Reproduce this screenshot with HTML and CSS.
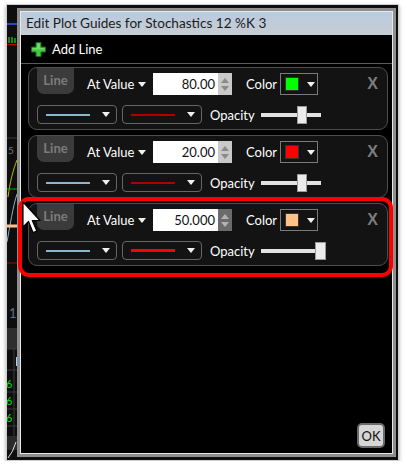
FILE: index.html
```html
<!DOCTYPE html>
<html lang="en">
<head>
    <meta charset="UTF-8">
    <meta name="viewport" content="width=device-width, initial-scale=1.0">
    <title>Edit Plot Guides</title>
    <link rel="stylesheet" href="styles.css">
</head>
<body>
    <div class="shot">
        <!-- chart peeking out behind the dialog -->
        <svg class="chart" viewBox="7 5 391 455" width="391" height="455">
            <rect x="7" y="5" width="391" height="455" fill="#0e0e0e"/>
            <line x1="7" y1="24" x2="17" y2="24" stroke="#2a46c8" stroke-width="2"/>
            <path d="M9 37v6M12 37v6M15 38v5" stroke="#20d020" stroke-width="1.2"/>
            <line x1="7" y1="44.5" x2="17" y2="44.5" stroke="#d00000" stroke-width="1"/>
            <line x1="7" y1="138" x2="17" y2="138" stroke="#3a3a3a"/>
            <text x="8" y="154" fill="#777" font-size="10" font-family="Lato, sans-serif">5</text>
            <path d="M8 197 C10 182 13 170 17 160" stroke="#b8b800" fill="none"/>
            <line x1="7" y1="189" x2="17" y2="189" stroke="#00b000"/>
            <path d="M7 242 C10 226 13 206 17 194" stroke="#8fb0c8" fill="none"/>
            <line x1="7" y1="226" x2="17" y2="226" stroke="#ffc090" stroke-width="3"/>
            <line x1="7" y1="263" x2="17" y2="263" stroke="#b00000"/>
            <text x="9" y="318" fill="#5b7590" font-size="13" font-family="Lato, sans-serif">1</text>
            <rect x="7" y="328" width="11" height="21" fill="#2e2e2e"/>
            <path d="M7 349H17M7 370H17M7 392H17M7 409H17M7 426H17M14 349V436" stroke="#3a3a3a"/>
            <rect x="16" y="357" width="1.5" height="9" fill="#9cd4ff"/>
            <text x="6" y="388" fill="#00e000" font-size="11" font-family="Lato, sans-serif">6</text>
            <text x="6" y="405" fill="#00e000" font-size="11" font-family="Lato, sans-serif">6</text>
            <text x="6" y="422" fill="#00e000" font-size="11" font-family="Lato, sans-serif">6</text>
            <rect x="7" y="436" width="11" height="14" fill="#2a2a2a"/>
            <path d="M8 458 Q13 452 16 442" stroke="#ddd" fill="none"/>
        </svg>

        <div class="dialog">
            <div class="dialog-inner">
                <div class="titlebar">Edit Plot Guides for Stochastics 12 %K 3</div>
                <div class="dialog-body">
                    <div class="add-line">
                        <svg class="plus" viewBox="0 0 15 15" width="15" height="15">
                            <path d="M5 0.5h5v4.5h4.5v5h-4.5v4.5h-5v-4.5h-4.5v-5h4.5z" fill="#3fc93f" stroke="#1d6a1d" stroke-width="1"/>
                            <path d="M6 1.5h3v4.5h4.5v1.5h-12v-1.5h4.5z" fill="#8ae88a" opacity="0.6"/>
                        </svg>
                        <span>Add Line</span>
                    </div>

                    <div class="guides">
                        <div class="guide">
                            <div class="guide-top">
                                <div class="line-tab">Line</div>
                                <div class="pick">At Value <span class="caret"></span></div>
                                <div class="value-input"><span class="value">80.00</span></div>
                                <div class="spin"><span class="up"></span><span class="down"></span></div>
                                <div class="color-label">Color</div>
                                <div class="color-box"><span class="swatch swatch-green"></span><span class="caret"></span></div>
                                <div class="remove">X</div>
                            </div>
                            <div class="guide-bottom">
                                <div class="style-select"><span class="stroke stroke-blue"></span><span class="caret"></span></div>
                                <div class="style-select"><span class="stroke stroke-darkred"></span><span class="caret"></span></div>
                                <div class="opacity-label">Opacity</div>
                                <div class="slider"><span class="thumb" style="left: 36px;"></span></div>
                            </div>
                        </div>

                        <div class="guide">
                            <div class="guide-top">
                                <div class="line-tab">Line</div>
                                <div class="pick">At Value <span class="caret"></span></div>
                                <div class="value-input"><span class="value">20.00</span></div>
                                <div class="spin"><span class="up"></span><span class="down"></span></div>
                                <div class="color-label">Color</div>
                                <div class="color-box"><span class="swatch swatch-red"></span><span class="caret"></span></div>
                                <div class="remove">X</div>
                            </div>
                            <div class="guide-bottom">
                                <div class="style-select"><span class="stroke stroke-blue"></span><span class="caret"></span></div>
                                <div class="style-select"><span class="stroke stroke-darkred"></span><span class="caret"></span></div>
                                <div class="opacity-label">Opacity</div>
                                <div class="slider"><span class="thumb" style="left: 36px;"></span></div>
                            </div>
                        </div>

                        <div class="guide">
                            <div class="guide-top">
                                <div class="line-tab">Line</div>
                                <div class="pick">At Value <span class="caret"></span></div>
                                <div class="value-input"><span class="value">50.000</span></div>
                                <div class="spin spin-active"><span class="up"></span><span class="down"></span></div>
                                <div class="color-label">Color</div>
                                <div class="color-box"><span class="swatch swatch-peach"></span><span class="caret"></span></div>
                                <div class="remove">X</div>
                            </div>
                            <div class="guide-bottom">
                                <div class="style-select"><span class="stroke stroke-blue"></span><span class="caret"></span></div>
                                <div class="style-select"><span class="stroke stroke-red"></span><span class="caret"></span></div>
                                <div class="opacity-label">Opacity</div>
                                <div class="slider"><span class="thumb thumb-big" style="left: 54px;"></span></div>
                            </div>
                        </div>
                    </div>

                    <div class="footer">
                        <button class="ok">OK</button>
                    </div>
                </div>
            </div>
        </div>

        <div class="highlight"></div>

        <svg class="cursor" viewBox="0 0 20 34" width="20" height="34">
            <path d="M1 1 L1 26 L6.5 20.5 L11 31.5 L14.8 30 L10.3 19.5 L18 19.5 Z" fill="#fff" stroke="#000" stroke-width="1.2" stroke-linejoin="round"/>
        </svg>
    </div>
</body>
</html>
```

FILE: styles.css
```css
* {
    margin: 0;
    padding: 0;
    box-sizing: border-box;
}

body {
    background: #fff;
    padding: 4px 0 0 6px;
    font-family: Lato, "Liberation Sans", sans-serif;
    font-size: 13px;
    overflow: hidden;
}

.shot {
    position: relative;
    width: 393px;
    height: 457px;
    border: 1px solid #cfcfcf;
    background: #0e0e0e;
    box-shadow: 0 2px 4px rgba(0,0,0,0.35);
}

.chart {
    position: absolute;
    top: 0;
    left: 0;
    display: block;
}

.dialog {
    position: relative;
    width: 379px;
    height: 449px;
    margin: 3px 0 0 10px;
    border: 3px solid #8e8e8e;
}

.dialog-inner {
    height: 100%;
    border: 1px solid #e8e8e8;
    display: flex;
    flex-direction: column;
    background: #000;
}

.titlebar {
    height: 23px;
    line-height: 23px;
    padding-left: 5px;
    background: linear-gradient(#b9cbe0, #c7ccd3);
    color: #1c1c1c;
    font-size: 13.6px;
}

.dialog-body {
    flex: 1;
    display: flex;
    flex-direction: column;
}

.add-line {
    height: 29px;
    display: flex;
    align-items: center;
    padding-left: 10px;
    gap: 6px;
    color: #fff;
    font-size: 13px;
    border-bottom: 1px solid #5a5a5a;
}

.plus {
    display: block;
}

.guides {
    flex: 1;
    display: flex;
    flex-direction: column;
    gap: 5px;
    padding: 3px 4px 0 7px;
}

.guide {
    height: 63px;
    border: 1px solid #4e4e4e;
    border-radius: 9px;
    background: #131313;
    padding-left: 8px;
}

.guide-top {
    display: flex;
    align-items: flex-start;
    height: 28px;
}

.line-tab {
    width: 37px;
    height: 26px;
    line-height: 25px;
    text-align: center;
    background: #3b3b3b;
    color: #7c7c7c;
    font-weight: bold;
    font-size: 13px;
    border-radius: 0 0 7px 7px;
}

.pick {
    width: 59px;
    margin: 5px 0 0 13px;
    height: 22px;
    line-height: 22px;
    color: #fff;
    display: flex;
    align-items: center;
    justify-content: space-between;
}

.caret {
    display: inline-block;
    width: 0;
    height: 0;
    border-left: 4px solid transparent;
    border-right: 4px solid transparent;
    border-top: 5px solid #f2f2f2;
}

.value-input {
    width: 65px;
    height: 22px;
    margin: 5px 0 0 7px;
    background: #fff;
    color: #111;
    text-align: right;
    line-height: 22px;
    padding-right: 3px;
}

.spin {
    width: 14px;
    height: 22px;
    margin-top: 5px;
    background: #c9c9c9;
    display: flex;
    flex-direction: column;
    align-items: center;
    justify-content: space-around;
    padding: 3px 0;
}

.spin .up {
    border-left: 4px solid transparent;
    border-right: 4px solid transparent;
    border-bottom: 5px solid #8a8a8a;
}

.spin .down {
    border-left: 4px solid transparent;
    border-right: 4px solid transparent;
    border-top: 5px solid #8a8a8a;
}

.spin-active {
    background: #6b6b6b;
}

.spin-active .up {
    border-bottom-color: #b3b3b3;
}

.spin-active .down {
    border-top-color: #b3b3b3;
}

.color-label {
    width: 34px;
    margin: 5px 0 0 14px;
    height: 22px;
    line-height: 22px;
    color: #fff;
}

.color-box {
    width: 38px;
    height: 22px;
    margin-top: 5px;
    border: 1px solid #7a7a7a;
    display: flex;
    align-items: center;
    padding-left: 4px;
    gap: 8px;
}

.swatch {
    width: 14px;
    height: 14px;
    border: 1px solid #333;
}

.swatch-green { background: #00ff00; }
.swatch-red { background: #ff0000; }
.swatch-peach { background: #ffc184; }

.remove {
    margin: 6px 9px 0 auto;
    color: #7d7d7d;
    font-family: "Liberation Sans", sans-serif;
    font-weight: bold;
    font-size: 16px;
    line-height: 20px;
}

.guide-bottom {
    display: flex;
    align-items: center;
    height: 19px;
    margin-top: 9px;
}

.style-select {
    width: 80px;
    height: 19px;
    border: 1px solid #666;
    border-radius: 4px;
    display: flex;
    align-items: center;
    padding-left: 8px;
    margin-right: 5px;
}

.stroke {
    width: 44px;
    height: 2px;
    margin-right: 12px;
}

.stroke-blue { background: #8ab8d0; }
.stroke-darkred { background: #b00000; }
.stroke-red { background: #ff0000; height: 3px; }

.opacity-label {
    width: 51px;
    margin-left: 3px;
    color: #fff;
}

.slider {
    position: relative;
    width: 60px;
    height: 4px;
    background: #e2e2e2;
}

.thumb {
    position: absolute;
    top: -7px;
    width: 10px;
    height: 18px;
    background: #ececec;
    border: 1px solid #999;
}

.thumb-big {
    width: 11px;
}

.footer {
    display: flex;
    justify-content: flex-end;
    padding: 0 7px 5px 0;
}

.ok {
    width: 28px;
    height: 25px;
    background: #d6d6d6;
    border: 2px solid #6a6a6a;
    border-radius: 5px;
    font-family: Lato, "Liberation Sans", sans-serif;
    font-size: 13px;
    color: #111;
}

.highlight {
    position: absolute;
    left: 11px;
    top: 192px;
    width: 375px;
    height: 80px;
    border: 4px solid #ff0000;
    border-radius: 11px;
}

.cursor {
    position: absolute;
    left: 15px;
    top: 196px;
    display: block;
}
```
